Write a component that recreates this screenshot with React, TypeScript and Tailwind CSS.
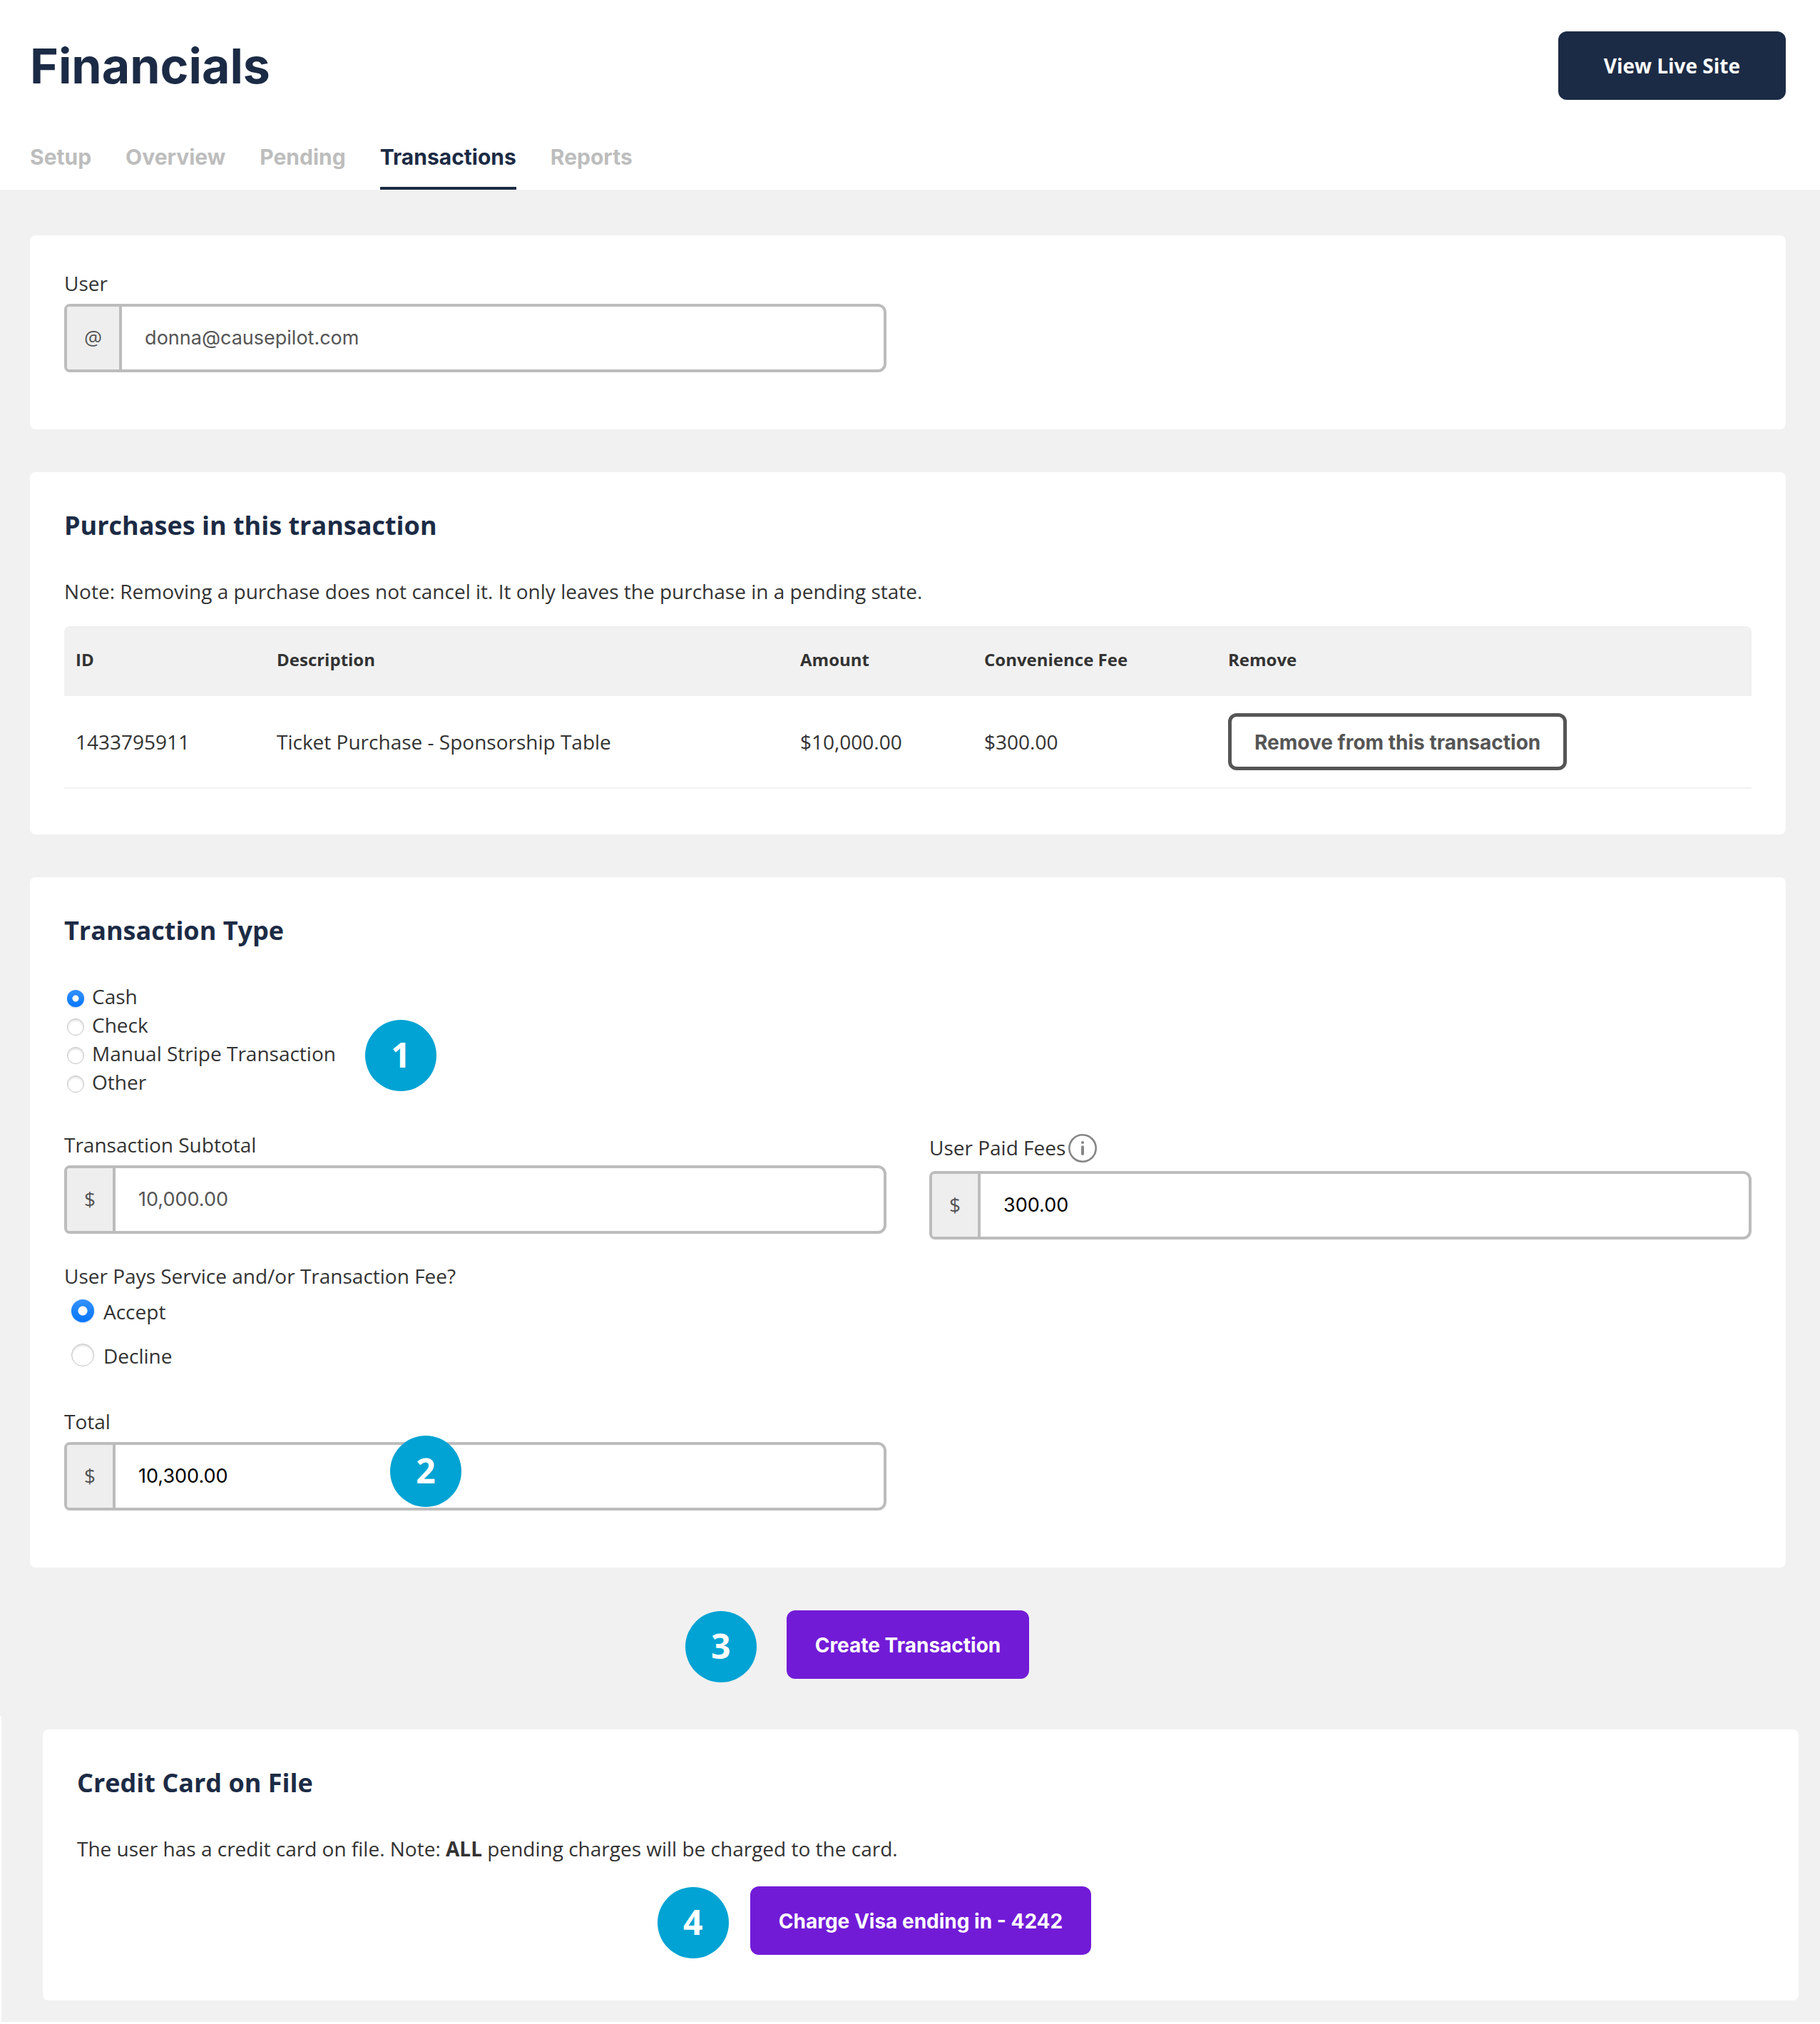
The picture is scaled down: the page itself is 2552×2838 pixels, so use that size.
import React from "react";

const tabs = ["Setup", "Overview", "Pending", "Transactions", "Reports"];
const purchases = [
  {
    id: "1433795911",
    description: "Ticket Purchase - Sponsorship Table",
    amount: "$10,000.00",
    fee: "$300.00",
  },
];
const types = ["Cash", "Check", "Manual Stripe Transaction", "Other"];

function Card({ title, children }: { title?: string; children: React.ReactNode }) {
  return (
    <section className="rounded-lg bg-white p-12">
      {title && (
        <h2 className="mb-[46px] text-[36px] leading-[54px] font-bold text-[#1c2b45]">{title}</h2>
      )}
      {children}
    </section>
  );
}

function Badge({ n, className }: { n: number; className: string }) {
  return (
    <span
      className={
        "absolute flex size-[100px] items-center justify-center rounded-full bg-[#00a3d3] pb-0.5 text-[48px] leading-none font-bold text-white " +
        className
      }
    >
      {n}
    </span>
  );
}

function InfoIcon() {
  return (
    <svg viewBox="0 0 40 40" className="size-10" fill="none" aria-hidden="true">
      <circle cx="20" cy="20" r="18.7" stroke="#868686" strokeWidth="2.6" />
      <circle cx="20" cy="12" r="2.1" fill="#868686" />
      <path d="M20 18.2V28" stroke="#868686" strokeWidth="4" strokeLinecap="round" />
    </svg>
  );
}

function Field({
  id,
  label,
  addon,
  value,
  muted = false,
  info = false,
  children,
}: {
  id: string;
  label: string;
  addon: string;
  value: string;
  muted?: boolean;
  info?: boolean;
  children?: React.ReactNode;
}) {
  return (
    <div>
      <div className={info ? "flex h-12 items-center gap-1" : "flex h-10 items-start"}>
        <label htmlFor={id} className="h-10">
          {label}
        </label>
        {info && <InfoIcon />}
      </div>
      <div className="relative mt-2 flex h-24 rounded-l-lg rounded-r-xl border-4 border-[#bcbcbc] bg-white">
        <span className="flex items-center rounded-l-sm border-r-4 border-[#bcbcbc] bg-[#eeeeee] px-6 pb-0.5 text-[#555555]">
          {addon}
        </span>
        <input
          id={id}
          type="text"
          defaultValue={value}
          readOnly={muted}
          className={
            "w-full min-w-0 flex-1 rounded-r-lg bg-transparent px-8 font-['Inter',sans-serif] text-[27px] outline-none " +
            (muted ? "text-[#555555]" : "text-black")
          }
        />
        {children}
      </div>
    </div>
  );
}

const radioBase =
  "shrink-0 appearance-none rounded-full border border-[#c4c4c4] bg-white shadow-[inset_0_2px_3px_rgba(0,0,0,0.14)] checked:border-0 checked:shadow-[0_1px_2px_rgba(0,90,220,0.3)] ";

export default function App() {
  return (
    <div className="min-h-screen bg-[#f1f1f1] font-['Open_Sans',sans-serif] text-[28px] leading-[38px] text-[#333333]">
      <header className="bg-white pt-11 pr-12 pl-[42px]">
        <div className="flex h-24 items-center justify-between">
          <h1 className="font-['Inter',sans-serif] text-[68px] leading-none font-bold text-[#1c2b45]">
            Financials
          </h1>
          <a
            href="#live"
            className="flex h-24 items-center rounded-xl bg-[#1c2b45] px-16 font-bold text-white"
          >
            View Live Site
          </a>
        </div>
        <nav className="mt-[60px] flex gap-12 font-['Inter',sans-serif] text-[30px] leading-10 font-bold text-[#bdbdbd]">
          {tabs.map((t) => (
            <a
              key={t}
              href={"#" + t.toLowerCase()}
              aria-current={t === "Transactions" ? "page" : undefined}
              className={
                t === "Transactions"
                  ? "border-b-4 border-[#1c2b45] pb-[22px] text-[#1c2b45]"
                  : "border-b-4 border-transparent pb-[22px]"
              }
            >
              {t}
            </a>
          ))}
        </nav>
      </header>

      <main>
        <div className="flex flex-col gap-[60px] pt-16 pr-12 pb-[52px] pl-[42px]">
          <Card>
            <div className="mb-8 grid grid-cols-2 gap-[60px]">
              <Field id="user" label="User" addon="@" value="donna@causepilot.com" muted />
            </div>
          </Card>

          <Card title="Purchases in this transaction">
            <p>
              Note: Removing a purchase does not cancel it. It only leaves the purchase in a pending
              state.
            </p>
            <table className="mt-[30px] mb-4 w-full table-fixed border-separate border-spacing-0 text-left">
              <thead>
                <tr className="h-[98px] text-[24px]">
                  <th className="w-[282px] rounded-tl-lg bg-[#f1f1f1] px-4 pb-1">ID</th>
                  <th className="w-[734px] bg-[#f1f1f1] px-4 pb-1">Description</th>
                  <th className="w-[258px] bg-[#f1f1f1] px-4 pb-1">Amount</th>
                  <th className="w-[342px] bg-[#f1f1f1] px-4 pb-1">Convenience Fee</th>
                  <th className="rounded-tr-lg bg-[#f1f1f1] px-4 pb-1">Remove</th>
                </tr>
              </thead>
              <tbody>
                {purchases.map((p) => (
                  <tr key={p.id}>
                    <td className="border-b-2 border-[#f1f1f1] px-4">{p.id}</td>
                    <td className="border-b-2 border-[#f1f1f1] px-4">{p.description}</td>
                    <td className="border-b-2 border-[#f1f1f1] px-4">{p.amount}</td>
                    <td className="border-b-2 border-[#f1f1f1] px-4">{p.fee}</td>
                    <td className="border-b-2 border-[#f1f1f1] px-4 py-6">
                      <button
                        type="button"
                        className="flex h-20 items-center rounded-xl border-5 border-[#555555] px-8 pt-0.5 font-['Inter',sans-serif] font-bold whitespace-nowrap text-[#555555]"
                      >
                        Remove from this transaction
                      </button>
                    </td>
                  </tr>
                ))}
              </tbody>
            </table>
          </Card>

          <Card title="Transaction Type">
            <div className="relative" role="radiogroup" aria-label="Transaction Type">
              {types.map((t, i) => (
                <label key={t} className="flex h-10 w-fit items-start gap-[11px] pl-1">
                  <input
                    type="radio"
                    name="type"
                    defaultChecked={i === 0}
                    className={
                      radioBase +
                      "mt-[10px] size-6 checked:bg-[radial-gradient(circle,#fff_4px,transparent_5px),linear-gradient(#3492ff,#0575ff)]"
                    }
                  />
                  {t}
                </label>
              ))}
              <Badge n={1} className="top-[52px] left-[422px]" />
            </div>

            <div className="mt-12 grid grid-cols-2 gap-[60px]">
              <Field
                id="subtotal"
                label="Transaction Subtotal"
                addon="$"
                value="10,000.00"
                muted
              />
              <Field id="fees" label="User Paid Fees" addon="$" value="300.00" info />
            </div>

            <fieldset className="mt-8">
              <legend>User Pays Service and/or Transaction Fee?</legend>
              <div className="mt-3 flex flex-col gap-[22px]">
                {["Accept", "Decline"].map((t, i) => (
                  <label key={t} className="flex h-10 w-fit items-start gap-[13px] pl-[10px]">
                    <input
                      type="radio"
                      name="pays"
                      defaultChecked={i === 0}
                      className={
                        radioBase +
                        "mt-0.5 size-8 checked:bg-[radial-gradient(circle,#fff_6px,transparent_7px),linear-gradient(#3492ff,#0575ff)]"
                      }
                    />
                    {t}
                  </label>
                ))}
              </div>
            </fieldset>

            <div className="mt-[52px] mb-8 grid grid-cols-2 gap-[60px]">
              <Field id="total" label="Total" addon="$" value="10,300.00">
                <Badge n={2} className="-top-[13px] left-[453px]" />
              </Field>
            </div>
          </Card>

          <div className="flex justify-center">
            <div className="relative">
              <button
                type="button"
                className="h-24 rounded-xl bg-[#721bd7] px-10 pt-0.5 font-['Inter',sans-serif] font-bold text-white"
              >
                Create Transaction
              </button>
              <Badge n={3} className="top-[1px] -left-[142px]" />
            </div>
          </div>
        </div>

        <div className="border-b-3 border-l-2 border-white pt-[19px] pr-[30px] pb-[30px] pl-[58px]">
          <Card title="Credit Card on File">
            <p>
              The user has a credit card on file. Note: <b>ALL</b> pending charges will be charged
              to the card.
            </p>
            <div className="mt-[34px] mb-4 flex justify-center">
              <div className="relative">
                <button
                  type="button"
                  className="h-24 rounded-xl bg-[#721bd7] px-10 pt-0.5 font-['Inter',sans-serif] font-bold text-white"
                >
                  Charge Visa ending in - 4242
                </button>
                <Badge n={4} className="top-[1px] -left-[130px]" />
              </div>
            </div>
          </Card>
        </div>
      </main>
    </div>
  );
}
